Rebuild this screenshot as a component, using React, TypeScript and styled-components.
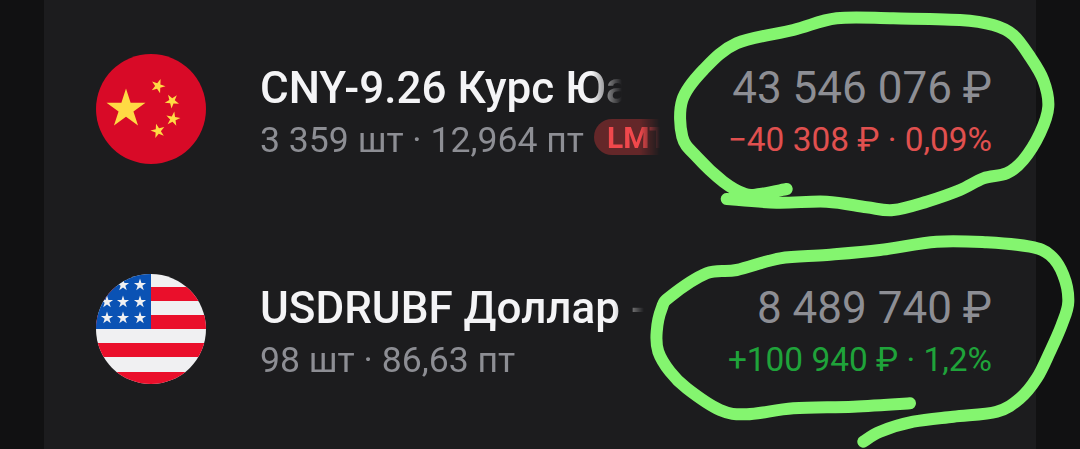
import React from "react";
import styled, { createGlobalStyle } from "styled-components";

const GlobalStyle = createGlobalStyle`
  html, body {
    margin: 0;
    padding: 0;
    background: #111112;
  }
  #root {
    width: 1080px;
    height: 449px;
    overflow: hidden;
  }
`;

type Point = [number, number];

function starPoints(cx: number, cy: number, r: number, rot = 0) {
  const pts: string[] = [];
  for (let i = 0; i < 10; i++) {
    const rad = i % 2 === 0 ? r : r * 0.382;
    const a = (-90 + rot + i * 36) * (Math.PI / 180);
    pts.push(`${(cx + rad * Math.cos(a)).toFixed(2)},${(cy + rad * Math.sin(a)).toFixed(2)}`);
  }
  return pts.join(" ");
}

// smooth line through the points of a hand drawn stroke
function smoothPath(points: Point[], dx: number, dy: number) {
  const p = points.map(([x, y]): Point => [x / 3 + dx, y / 3 + dy]);
  let d = `M${p[0][0].toFixed(1)} ${p[0][1].toFixed(1)}`;
  for (let i = 0; i < p.length - 1; i++) {
    const a = p[Math.max(i - 1, 0)];
    const b = p[i];
    const c = p[i + 1];
    const e = p[Math.min(i + 2, p.length - 1)];
    const c1x = b[0] + (c[0] - a[0]) / 6;
    const c1y = b[1] + (c[1] - a[1]) / 6;
    const c2x = c[0] - (e[0] - b[0]) / 6;
    const c2y = c[1] - (e[1] - b[1]) / 6;
    d += ` C${c1x.toFixed(1)} ${c1y.toFixed(1)} ${c2x.toFixed(1)} ${c2y.toFixed(1)} ${c[0].toFixed(1)} ${c[1].toFixed(1)}`;
  }
  return d;
}

const topScribble: Point[] = [
  [380, 567], [300, 582], [255, 582], [190, 545], [110, 470], [67, 410], [67, 300], [130, 210],
  [230, 130], [400, 90], [530, 55], [700, 55], [900, 60], [1000, 75], [1060, 105], [1110, 170],
  [1150, 240], [1165, 320], [1140, 400], [1090, 480], [1040, 520], [970, 535], [900, 570],
  [800, 605], [700, 630], [620, 622], [500, 605], [350, 608], [200, 597],
];

const bottomScribble: Point[] = [
  [870, 535], [700, 545], [520, 550], [380, 568], [300, 555], [200, 490], [150, 440], [115, 380],
  [110, 320], [125, 250], [150, 215], [260, 145], [350, 135], [480, 100], [620, 90], [780, 75],
  [950, 50], [1100, 52], [1230, 65], [1290, 90], [1330, 150], [1345, 230], [1325, 300], [1290, 380],
  [1250, 460], [1200, 520], [1130, 560], [1000, 575], [880, 590], [780, 620], [730, 650],
];

const ChinaFlag = () => (
  <FlagSvg viewBox="0 0 110 110">
    <circle cx="55" cy="55" r="55" fill="#d80a27" />
    <polygon points={starPoints(30, 55, 20.5)} fill="#ffda44" />
    <polygon points={starPoints(62, 32, 7.5, 20)} fill="#ffda44" />
    <polygon points={starPoints(76, 47, 7.5, 40)} fill="#ffda44" />
    <polygon points={starPoints(77, 65, 7.5, 10)} fill="#ffda44" />
    <polygon points={starPoints(62, 77, 7.5, -15)} fill="#ffda44" />
  </FlagSvg>
);

const usaStars: Point[] = [
  [27, 11], [44, 11],
  [11, 28], [27, 28], [44, 28],
  [11, 44], [27, 44], [44, 44],
];

const UsaFlag = () => (
  <FlagSvg viewBox="0 0 110 110">
    <defs>
      <clipPath id="usa-circle">
        <circle cx="55" cy="55" r="55" />
      </clipPath>
    </defs>
    <g clipPath="url(#usa-circle)">
      <rect width="110" height="110" fill="#f0f0f2" />
      <rect y="13" width="110" height="14" fill="#ea0f2b" />
      <rect y="41" width="110" height="14" fill="#ea0f2b" />
      <rect y="69" width="110" height="14" fill="#ea0f2b" />
      <rect y="98" width="110" height="12" fill="#ea0f2b" />
      <rect width="55" height="55" fill="#0a52b4" />
      {usaStars.map(([x, y]) => (
        <polygon key={`${x}-${y}`} points={starPoints(x, y, 6.4)} fill="#f0f0f2" />
      ))}
    </g>
  </FlagSvg>
);

const App: React.FC = () => {
  return (
    <>
      <GlobalStyle />
      <Screen>
        <Panel>
          <Row>
            <ChinaFlag />
            <Info>
              <Name $width={362}>CNY-9.26 Курс Юа</Name>
              <Meta>
                <span>3 359 шт · 12,964 пт</span>
                <Badge>LMT</Badge>
              </Meta>
            </Info>
            <Figures>
              <Price>43 546 076 ₽</Price>
              <Change $positive={false}>−40 308 ₽ · 0,09%</Change>
            </Figures>
          </Row>
          <Row>
            <UsaFlag />
            <Info>
              <Name $width={384}>USDRUBF Доллар -</Name>
              <Meta>
                <span>98 шт · 86,63 пт</span>
              </Meta>
            </Info>
            <Figures>
              <Price>8 489 740 ₽</Price>
              <Change $positive>+100 940 ₽ · 1,2%</Change>
            </Figures>
          </Row>
        </Panel>
        <Scribbles viewBox="0 0 1080 449">
          <path d={smoothPath(topScribble, 660, 0)} />
          <path d={smoothPath(bottomScribble, 620, 225)} />
        </Scribbles>
      </Screen>
    </>
  );
};

const Screen = styled.div`
  position: relative;
  width: 1080px;
  height: 449px;
  padding: 0 44px;
  box-sizing: border-box;
  background: #111112;
  overflow: hidden;
  font-family: Roboto, "Liberation Sans", sans-serif;
`;

const Panel = styled.div`
  height: 100%;
  background: #1c1c1e;
  padding: 4px 44px 0 52px;
  box-sizing: border-box;
  display: flex;
  flex-direction: column;
  gap: 10px;
`;

const Row = styled.div`
  height: 210px;
  display: flex;
  align-items: center;
`;

const FlagSvg = styled.svg`
  width: 110px;
  height: 110px;
  flex-shrink: 0;
`;

const Info = styled.div`
  margin-left: 54px;
  padding-top: 6px;
  width: 400px;
  flex-shrink: 0;
  display: flex;
  flex-direction: column;
  gap: 4px;
`;

const Name = styled.div<{ $width: number }>`
  width: ${(p) => p.$width}px;
  font-size: 44px;
  line-height: 52px;
  font-weight: 500;
  color: #f4f4f6;
  white-space: nowrap;
  overflow: hidden;
  -webkit-mask-image: linear-gradient(to right, #000 calc(100% - 30px), transparent);
  mask-image: linear-gradient(to right, #000 calc(100% - 30px), transparent);
`;

const Meta = styled.div`
  display: flex;
  align-items: center;
  gap: 10px;
  height: 44px;
  font-size: 35.6px;
  color: #8d8e94;
  white-space: nowrap;
  overflow: hidden;
  -webkit-mask-image: linear-gradient(to right, #000 calc(100% - 20px), transparent);
  mask-image: linear-gradient(to right, #000 calc(100% - 20px), transparent);
`;

const Badge = styled.span`
  flex-shrink: 0;
  height: 36px;
  margin-top: -6px;
  padding: 0 14px 0 13px;
  border-radius: 18px;
  background: #642729;
  color: #f0484c;
  font-size: 30px;
  font-weight: 700;
  line-height: 37px;
`;

const Figures = styled.div`
  margin-left: auto;
  padding-top: 6px;
  display: flex;
  flex-direction: column;
  align-items: flex-end;
  gap: 4px;
`;

const Price = styled.div`
  font-size: 44px;
  line-height: 52px;
  color: #8d8e94;
  white-space: nowrap;
`;

const Change = styled.div<{ $positive: boolean }>`
  font-size: 33.4px;
  line-height: 44px;
  color: ${(p) => (p.$positive ? "#1fa33a" : "#e0504f")};
  white-space: nowrap;
`;

const Scribbles = styled.svg`
  position: absolute;
  inset: 0;
  width: 1080px;
  height: 449px;
  fill: none;
  stroke: #84f56f;
  stroke-width: 12;
  stroke-linecap: round;
  stroke-linejoin: round;
  pointer-events: none;
`;

export default App;
